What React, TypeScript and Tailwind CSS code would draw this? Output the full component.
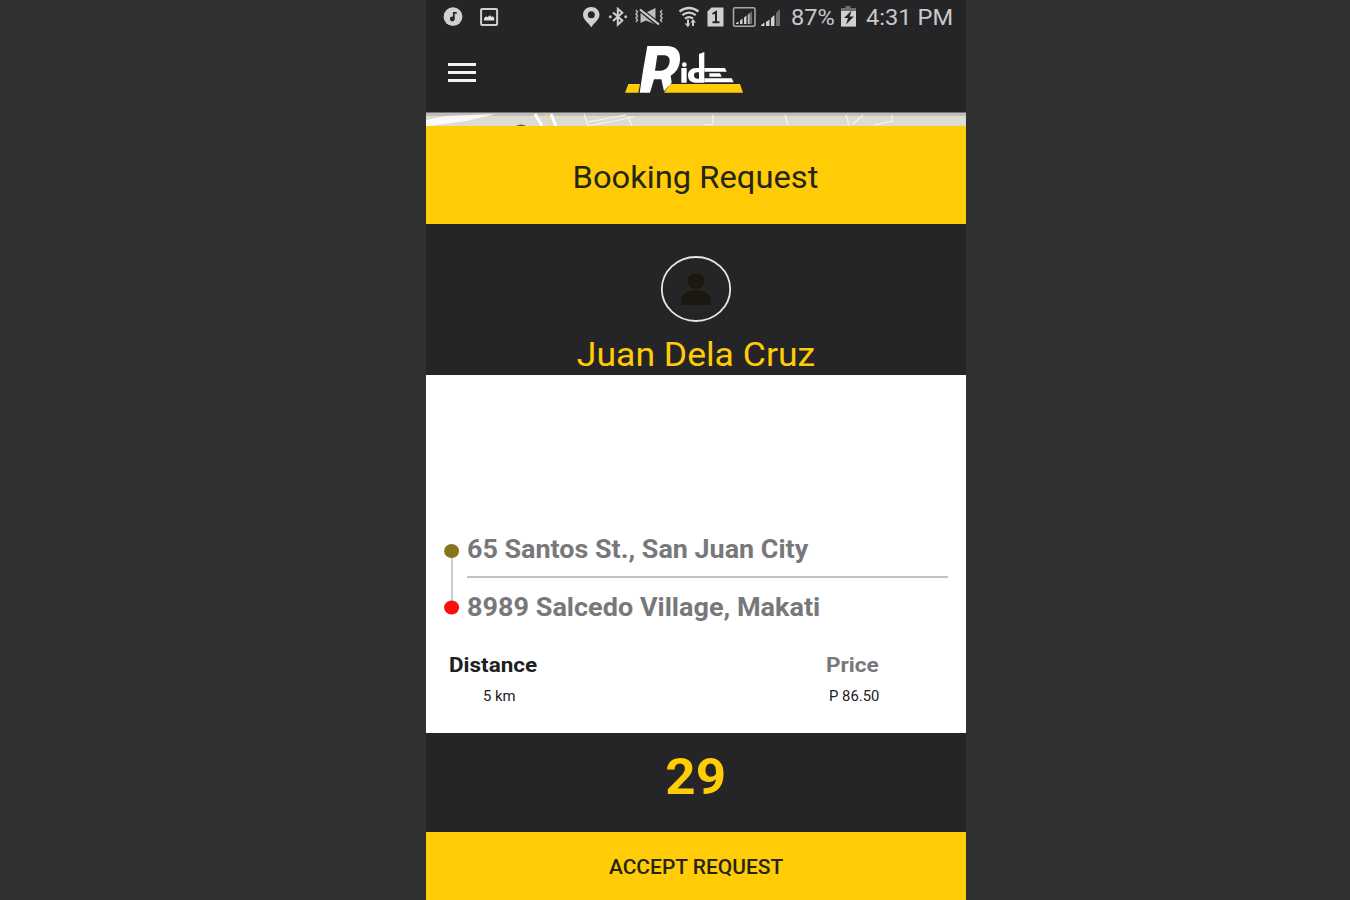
import React from "react";

function Text({ className, children }: { className: string; children: React.ReactNode }) {
  return <span className={`inline-block whitespace-nowrap ${className}`}>{children}</span>;
}

function StatusBar() {
  return (
    <div className="flex h-9 shrink-0 items-start text-[#c9c9c9]">
      <svg className="ml-[17px] mt-[7px]" width="20" height="20" viewBox="0 0 20 20">
        <circle cx="10" cy="9.7" r="9.4" fill="#d0d0cc" />
        <path d="M10.800 12V5.800h2.900" fill="none" stroke="#252527" strokeWidth="1.700" />
        <circle cx="9.3" cy="12" r="2.400" fill="#252527" />
      </svg>
      <svg className="ml-[16px] mt-[7px]" width="20" height="20" viewBox="0 0 20 20">
        <rect x="2.1" y="2" width="16" height="16" rx="1" fill="none" stroke="#d0d0cc" strokeWidth="2" />
        <path d="M5 13.5v-2.3l2-1.9 1.6 1 2.2-2 1.8 1.7 1.4-.8 1.2 1.7v2.6z" fill="#e0e0dc" />
      </svg>
      <svg className="ml-[83px] mt-[7px]" width="18" height="21" viewBox="0 0 18 21">
        <path fillRule="evenodd" d="M9.3 0C4.6 0 1 3.500 1 7.800c0 5 5.500 8 8.300 12.500C12 15.800 17.500 12.800 17.500 7.800 17.500 3.500 14 0 9.300 0zm0 4.200a3.500 3.500 0 1 1 0 7 3.500 3.500 0 0 1 0-7z" fill="#d0d0cc" />
      </svg>
      <svg className="ml-[8px] mt-[7px]" width="20" height="20" viewBox="0 0 20 20">
        <path d="M5 5.500l9.300 8-4.500 4.200V1.800l4.500 4L5 14" fill="none" stroke="#d0d0cc" strokeWidth="2" />
        <circle cx="2.300" cy="9.800" r="1.500" fill="#c0c0bc" /><circle cx="17.700" cy="9.800" r="1.500" fill="#c0c0bc" />
      </svg>
      <svg className="ml-[6px] mt-[7px]" width="31" height="20" viewBox="0 0 31 20">
        <path d="M6.500 5.500H12L21.500 1v16.500L12 13.500 6.500 16z" fill="#bdbdba" />
        <path d="M6 4L24 19" stroke="#252527" strokeWidth="2" />
        <path d="M6.500 1L25 15.500" stroke="#252527" strokeWidth="1.500" />
        <path d="M6 2.500L25 17.500" stroke="#d0d0cc" strokeWidth="2.200" />
        <path d="M2 3l1.500 2L2 7l1.500 2L2 11l1.500 2L2 15M28 3l-1.500 2L28 7l-1.500 2L28 11l-1.500 2L28 15" fill="none" stroke="#b5b5b2" strokeWidth="1.500" />
      </svg>
      <svg className="ml-[13px] mt-[6px]" width="22" height="22" viewBox="0 0 22 22">
        <path d="M1.500 5.500Q11-1.500 20.500 5.500M4.300 9.200Q11 4 17.700 9.200M7 12.700Q11 9.500 15 12.700" fill="none" stroke="#d0d0cc" strokeWidth="2.200" />
        <path d="M9 13.500v4H6.700l3.300 3.800 2.300-3.800H11v-4zM14 20v-3.500h-1.500L15 13l3 3.500h-2V20z" fill="#d0d0cc" />
      </svg>
      <svg className="ml-[7px] mt-[7px]" width="18" height="20" viewBox="0 0 18 20">
        <path d="M4.500.5H16.500V19.500H.5V4.500z" fill="#d0d0cc" />
        <path d="M5.500 7L9 5v9.500M5.500 15.200h7" fill="none" stroke="#252527" strokeWidth="2" />
      </svg>
      <svg className="ml-[7px] mt-[7px]" width="25" height="20" viewBox="0 0 25 20">
        <rect x="1.500" y=".8" width="21.500" height="18.400" rx="1.500" fill="none" stroke="#aaa" strokeWidth="1.500" />
        <path d="M4 17h2.500v-2.500L4 16zM8 17h2.500v-5.500L8 13.500zM12 17h2.500V8.500L12 10.500z" fill="#d0d0cc" />
        <path d="M16 17h4V4l-4 4z" fill="#687070" />
        <path d="M15.800 17h1.700V6l-1.700 1.700z" fill="#bbb" />
      </svg>
      <svg className="ml-[4px] mt-[8px]" width="20" height="19" viewBox="0 0 20 19">
        <path d="M0 18h3.500v-3.500L0 17zM5 18h3.500v-6.500L5 14zM10 18h3.500V7L10 10z" fill="#d0d0cc" />
        <path d="M15 18h4V1l-4 4z" fill="#687070" />
      </svg>
      <div className="ml-[10px] w-[44px] pt-[5px] leading-[26px]"><Text className="origin-left scale-x-[1.07] text-[22px]">87%</Text></div>
      <svg className="ml-[5px] mt-[5px]" width="18" height="22" viewBox="0 0 18 22">
        <path d="M5.500 1h5v2H16v18.500H1V3h4.500z" fill="#687070" />
        <path d="M1 6h15v15.500H1z" fill="#d0d0cc" />
        <path d="M11.500 5.500L4 13h4l-2 6.500 8-8H9.800z" fill="#252527" />
      </svg>
      <div className="ml-[8px] w-[90px] pt-[5px] leading-[26px]"><Text className="origin-left scale-x-[1.075] text-[22px]">4:31 PM</Text></div>
    </div>
  );
}

function Logo() {
  return (
    <svg width="140" height="65" viewBox="0 0 420 195">
      <path d="M40 138H75L70 164H30zM166 138H375L384 164H147z" fill="#ffcc05" />
      <path fillRule="evenodd" d="M97 24H155C184 24 196 40 195 64C194 89 184 102 167 113L170 134L147 160L139 124H117L105 164H74L84 98zM127 52L120 98H137C153 98 164 84 164 69C164 57 157 52 145 52z" fill="#fff" />
      <path d="M199 90H215V134H199zM252 48L268 42V134H242C226 134 219 125 219 112C219 99 229 90 243 90H252zM252 103H246C240 103 237 107 237 112C237 118 240 122 246 122H252z" fill="#fff" fillRule="evenodd" />
      <circle cx="208" cy="80" r="7" fill="#fff" />
      <path d="M268 90H330L335 101H268zM283 106H315L320 116H283zM268 121H350L356 133H268z" fill="#fff" />
    </svg>
  );
}

export default function App() {
  return (
    <div className="flex h-[900px] w-full justify-center overflow-hidden bg-[#303030] pl-[42px] font-['Roboto',sans-serif]">
      <main className="flex w-[540px] shrink-0 flex-col bg-[#252527]">
        <StatusBar />
        <header className="flex h-[76px] shrink-0 items-start">
          <div className="ml-[22px] mt-[27px] flex w-[28px] flex-col gap-[5px]">
            <div className="h-[3px] bg-[#f4f4f2]" />
            <div className="h-[3px] bg-[#f4f4f2]" />
            <div className="h-[3px] bg-[#f4f4f2]" />
          </div>
          <div className="ml-[139px] mt-[2px]"><Logo /></div>
        </header>
        <svg className="block shrink-0" width="540" height="14" viewBox="0 0 540 14">
          <rect width="540" height="14" fill="#dcdcd3" />
          <rect width="540" height="4" fill="#bebeba" />
          <rect width="540" height="1" fill="#73736f" />
          <path d="M0 8L20 4 70 2 40 9 5 14H0z" fill="#fff" opacity=".85" />
          <path d="M109 2l7 12M125 2l5 12" stroke="#fff" strokeWidth="3" />
          <path d="M120 2l6 12" stroke="#eed678" strokeWidth="1.500" />
          <path d="M158 2l4 12 46-9M202 4l4 10M162 10l38-7M287 3v9l-9 1M359 3l3 10M420 3l3 10M437 3l-10 9M466 3v6l-18 4" fill="none" stroke="#f5f5f2" strokeWidth="1.200" />
          <path d="M90 14q5-3 10 0z" fill="#605c40" />
        </svg>
        <section className="flex h-[98px] shrink-0 items-center justify-center bg-[#ffcc05] pr-px text-[#252517]">
          <Text className="scale-x-[1.055] pt-[6px] text-[31px] leading-[36px]">Booking Request</Text>
        </section>
        <section className="flex h-[151px] shrink-0 flex-col items-center pt-[32px]">
          <svg width="72" height="66" viewBox="0 0 72 66">
            <ellipse cx="36" cy="33" rx="34.200" ry="32" fill="none" stroke="#e8e8e3" strokeWidth="1.800" />
            <ellipse cx="36" cy="25" rx="8.500" ry="8" fill="#1c1810" />
            <path d="M21 49v-5c0-6 7-10 15-10s15 4 15 10v5z" fill="#1c1810" />
          </svg>
          <Text className="mt-[11px] scale-x-[1.045] text-[34px] leading-[42px] text-[#ffcc05]">Juan Dela Cruz</Text>
        </section>
        <section className="flex h-[358px] shrink-0 flex-col bg-white pt-[157px]">
          <div className="flex h-[91px] shrink-0">
            <svg className="ml-[18px] mt-[12px]" width="16" height="72" viewBox="0 0 16 72">
              <path d="M8 8v56" stroke="#bdbdb5" strokeWidth="1.500" />
              <ellipse cx="7.600" cy="7" rx="7.500" ry="7" fill="#87751b" />
              <ellipse cx="7.600" cy="63.500" rx="7.500" ry="7" fill="#fa0f0f" />
            </svg>
            <div className="ml-[7px] flex w-[481px] flex-col text-[25.500px] font-bold text-[#77787a]">
              <div className="h-[46px] shrink-0 border-b-2 border-[#c2c2bc] pt-[2px] leading-[30px]"><Text className="origin-left scale-x-[1.055]">65 Santos St., San Juan City</Text></div>
              <div className="pt-[14px] leading-[30px]"><Text className="origin-left scale-x-[1.06]">8989 Salcedo Village, Makati</Text></div>
            </div>
          </div>
          <div className="mt-[29px] flex justify-between pl-[23px] pr-[85px]">
            <div className="w-[100px]">
              <div className="text-[21px] font-bold leading-[26px] text-[#202020]"><Text className="origin-left scale-x-[1.07]">Distance</Text></div>
              <div className="pl-[34px] pt-[8px] text-[14px] leading-[20px] text-[#202020]"><Text className="origin-left scale-x-[1.06]">5 km</Text></div>
            </div>
            <div className="w-[55px]">
              <div className="text-[21px] font-bold leading-[26px] text-[#77787a]"><Text className="origin-left scale-x-[1.075]">Price</Text></div>
              <div className="pl-[3px] pt-[8px] text-[14px] leading-[20px] text-[#202020]"><Text className="origin-left scale-x-[1.06]">P 86.50</Text></div>
            </div>
          </div>
        </section>
        <section className="flex h-[99px] shrink-0 justify-center pt-[14px] text-[#ffcc05]">
          <Text className="scale-x-[1.06] text-[50px] font-bold leading-[60px]">29</Text>
        </section>
        <button className="flex h-[68px] shrink-0 items-center justify-center bg-[#ffcc05] text-[#252517]">
          <Text className="scale-x-[1.075] pt-[3px] text-[19.500px] font-medium">ACCEPT REQUEST</Text>
        </button>
      </main>
    </div>
  );
}
